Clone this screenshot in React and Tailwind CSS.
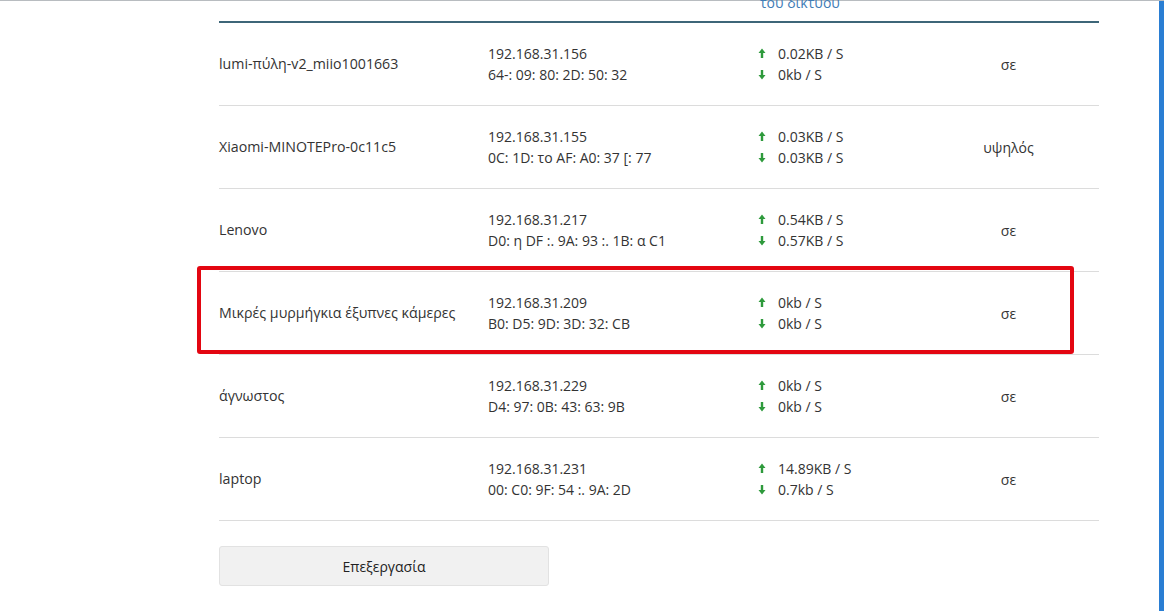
import React from "react";

const rows = [
  { name: "lumi-πύλη-v2_miio1001663", ip: "192.168.31.156", mac: "64-: 09: 80: 2D: 50: 32", up: "0.02KB / S", down: "0kb / S", st: "σε" },
  { name: "Xiaomi-MINOTEPro-0c11c5", ip: "192.168.31.155", mac: "0C: 1D: το AF: A0: 37 [: 77", up: "0.03KB / S", down: "0.03KB / S", st: "υψηλός" },
  { name: "Lenovo", ip: "192.168.31.217", mac: "D0: η DF :. 9A: 93 :. 1B: α C1", up: "0.54KB / S", down: "0.57KB / S", st: "σε" },
  { name: "Μικρές μυρμήγκια έξυπνες κάμερες", ip: "192.168.31.209", mac: "B0: D5: 9D: 3D: 32: CB", up: "0kb / S", down: "0kb / S", st: "σε", hl: true },
  { name: "άγνωστος", ip: "192.168.31.229", mac: "D4: 97: 0B: 43: 63: 9B", up: "0kb / S", down: "0kb / S", st: "σε" },
  { name: "laptop", ip: "192.168.31.231", mac: "00: C0: 9F: 54 :. 9A: 2D", up: "14.89KB / S", down: "0.7kb / S", st: "σε" },
];

function Up() {
  return (
    <svg width="8" height="11" viewBox="0 0 8 11" className="shrink-0">
      <path d="M4 0.5 L7.5 5 H5.2 V10 H2.8 V5 H0.5 Z" fill="#2e9a3c" />
    </svg>
  );
}
function Down() {
  return (
    <svg width="8" height="11" viewBox="0 0 8 11" className="shrink-0">
      <path d="M4 10.5 L7.5 6 H5.2 V1 H2.8 V6 H0.5 Z" fill="#2e9a3c" />
    </svg>
  );
}

export default function App() {
  return (
    <div
      className="relative w-[1164px] h-[611px] overflow-hidden bg-white text-[#333] text-[14px]"
      style={{ fontFamily: '"Open Sans", "Noto Sans", sans-serif' }}
    >
      <div className="h-px bg-[#b8bcc0]" />
      <div className="flex h-full">
        <div className="w-[219px] shrink-0" />
        <div className="w-[880px] shrink-0">
          <div className="flex items-end h-[22px] border-b-2 border-[#3d6678] pb-[8px]">
            <div className="w-[269px]" />
            <div className="w-[270px]" />
            <div className="w-[160px] pl-[2px] text-[#3f7cb6] leading-[21px]">του δικτύου</div>
          </div>
          {rows.map((r, i) => (
            <div key={i} className="relative flex items-center h-[83px] border-b border-[#dcdcdc]">
              <div className="w-[269px] shrink-0 text-[14.2px]">{r.name}</div>
              <div className="w-[270px] shrink-0 leading-[21px]">
                <div>{r.ip}</div>
                <div>{r.mac}</div>
              </div>
              <div className="w-[160px] shrink-0 leading-[21px]">
                <div className="flex items-center gap-[12px]"><Up /><span>{r.up}</span></div>
                <div className="flex items-center gap-[12px]"><Down /><span>{r.down}</span></div>
              </div>
              <div className="w-[181px] shrink-0 text-center">{r.st}</div>
              {r.hl && (
                <div className="absolute left-[-22px] top-[-6px] w-[877px] h-[88px] border-[4px] border-[#e30611] rounded-[3px]" />
              )}
            </div>
          ))}
          <div className="mt-[25px] w-[330px] h-[40px] flex items-center justify-center bg-[#f1f1f1] border border-[#e2e2e2] rounded-[3px] text-[#222]">
            Επεξεργασία
          </div>
        </div>
        <div className="flex-1" />
        <div className="w-[5px] bg-[#2a7ed3]" />
      </div>
    </div>
  );
}
